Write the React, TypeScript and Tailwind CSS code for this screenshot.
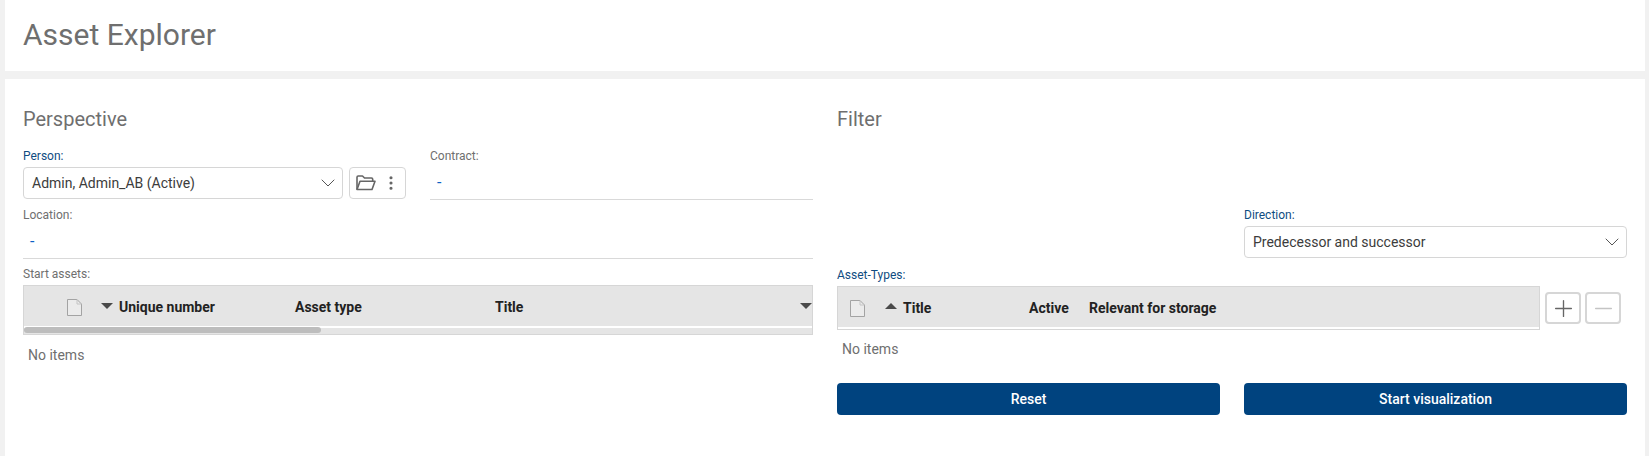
import { ChevronDown, MoreVertical, Plus, Minus } from 'lucide-react';

function FolderOpen() {
  return (
    <svg width="20" height="16" viewBox="0 0 20 16" fill="none" stroke="#666" strokeWidth="1.6" strokeLinejoin="round">
      <path d="M1 14.5V2.2C1 1.5 1.5 1 2.2 1H6.5L8.5 3H15.5C16.2 3 16.7 3.5 16.7 4.2V6" />
      <path d="M1 14.5L4 6.2H19L16 14.5H1Z" />
    </svg>
  );
}

function PageIcon() {
  return (
    <svg width="15" height="17" viewBox="0 0 15 17" fill="#ebebeb" stroke="#a3a3a3" strokeWidth="1">
      <path d="M0.5 0.5H10L14.5 5V16.5H0.5V0.5Z" />
      <path d="M10 0.5V5H14.5" fill="none" stroke="#c4c4c4" />
    </svg>
  );
}

function Caret({ up }: { up?: boolean }) {
  return (
    <span
      className={
        up
          ? 'mb-1 w-0 h-0 border-x-[6px] border-x-transparent border-b-[6px] border-b-[#4a4a4a]'
          : 'mb-1 w-0 h-0 border-x-[6px] border-x-transparent border-t-[6px] border-t-[#4a4a4a]'
      }
    />
  );
}

function Label({ text, className = '' }: { text: string; className?: string }) {
  return <div className={`h-3.5 text-xs leading-[14px] ${className}`}>{text}</div>;
}

function Select({ value }: { value: string }) {
  return (
    <div className="h-8 flex-1 flex items-center justify-between border border-[#d6d6d6] rounded-sm pl-2 pr-0.5 text-[14px] text-[#3c3c3c]">
      <span>{value}</span>
      <ChevronDown size={24} strokeWidth={1} color="#555" />
    </div>
  );
}

function ReadField({ className = '' }: { className?: string }) {
  return (
    <div className={`h-[33px] flex items-center pl-[7px] border-b border-[#d9d9d9] text-base text-[#0a62c4] ${className}`}>-</div>
  );
}

function PrimaryButton({ text }: { text: string }) {
  return (
    <button className="flex-1 h-8 bg-[#00437f] rounded-sm text-white text-[14px] font-medium">{text}</button>
  );
}

export default function App() {
  return (
    <div className="min-h-screen bg-[#f1f1f1] pl-[5px] pr-1 flex flex-col gap-2 font-['Roboto',sans-serif]">
      <div className="h-[71px] bg-white pl-[18px] pb-0.5 flex items-center">
        <h1 className="text-[30px] text-[#6f6f6f]">Asset Explorer</h1>
      </div>

      <div className="flex-1 bg-white px-[18px] pt-7 flex gap-6">
        {/* Perspective */}
        <div className="w-[790px]">
          <h2 className="text-xl leading-6 text-[#6f6f6f]">Perspective</h2>
          <div className="flex mt-[18px]">
            <div className="w-[383px]">
              <Label text="Person:" className="text-[#0f4c81]" />
              <div className="flex gap-[6px] mt-1">
                <Select value="Admin, Admin_AB (Active)" />
                <div className="w-[57px] h-8 flex items-center justify-center gap-1.5 border border-[#d6d6d6] rounded-sm">
                  <FolderOpen />
                  <MoreVertical size={18} strokeWidth={2.2} color="#666" />
                </div>
              </div>
            </div>
            <div className="w-[383px] ml-6">
              <Label text="Contract:" className="text-[#6f6f6f]" />
              <ReadField className="mt-1" />
            </div>
          </div>
          <Label text="Location:" className="text-[#6f6f6f] mt-2" />
          <ReadField className="mt-1" />
          <Label text="Start assets:" className="text-[#6f6f6f] mt-2" />
          <div className="mt-1 h-[50px] border border-[#d6d6d6] bg-[#e5e5e5] flex flex-col">
            <div className="h-10 pt-[3px] flex items-center text-[14px] font-bold text-[#222]">
              <div className="w-[58px] flex justify-end">
                <PageIcon />
              </div>
              <div className="ml-[19px] w-[194px] flex items-center gap-1.5">
                <Caret />
                <span>Unique number</span>
              </div>
              <span className="w-[200px]">Asset type</span>
              <span className="flex-1">Title</span>
              <span className="flex">
                <Caret />
              </span>
            </div>
            <div className="h-0.5 bg-white" />
            <div className="flex-1">
              <div className="w-[297px] h-1.5 -mt-px rounded-full bg-[#bdbdbd]" />
            </div>
          </div>
          <div className="mt-2.5 ml-[5px] text-sm text-[#6f6f6f]">No items</div>
        </div>

        {/* Filter */}
        <div className="w-[790px]">
          <h2 className="text-xl leading-6 text-[#6f6f6f]">Filter</h2>
          <div className="ml-[407px] mt-[77px]">
            <Label text="Direction:" className="text-[#0f4c81]" />
            <div className="flex mt-1">
              <Select value="Predecessor and successor" />
            </div>
          </div>
          <Label text="Asset-Types:" className="text-[#0f4c81] mt-2.5" />
          <div className="flex mt-1">
            <div className="w-[703px] h-11 border border-[#d6d6d6] bg-white">
              <div className="h-10 pt-0.5 bg-[#e5e5e5] flex items-center text-[14px] font-bold text-[#222]">
                <div className="w-[27px] flex justify-end">
                  <PageIcon />
                </div>
                <div className="ml-[20px] w-[144px] flex items-center gap-1.5">
                  <Caret up />
                  <span>Title</span>
                </div>
                <span className="w-[60px]">Active</span>
                <span>Relevant for storage</span>
              </div>
            </div>
            <div className="flex gap-1 ml-[5px] mt-1.5">
              <div className="w-9 h-8 border-2 border-[#d6d6d6] rounded-sm flex items-center justify-center">
                <Plus size={27} strokeWidth={1.2} color="#666" />
              </div>
              <div className="w-9 h-8 border-2 border-[#d6d6d6] rounded-sm flex items-center justify-center">
                <Minus size={27} strokeWidth={1.2} color="#c4c4c4" />
              </div>
            </div>
          </div>
          <div className="mt-[9px] ml-[5px] text-sm text-[#6f6f6f]">No items</div>
          <div className="flex gap-6 mt-6">
            <PrimaryButton text="Reset" />
            <PrimaryButton text="Start visualization" />
          </div>
        </div>
      </div>
    </div>
  );
}
